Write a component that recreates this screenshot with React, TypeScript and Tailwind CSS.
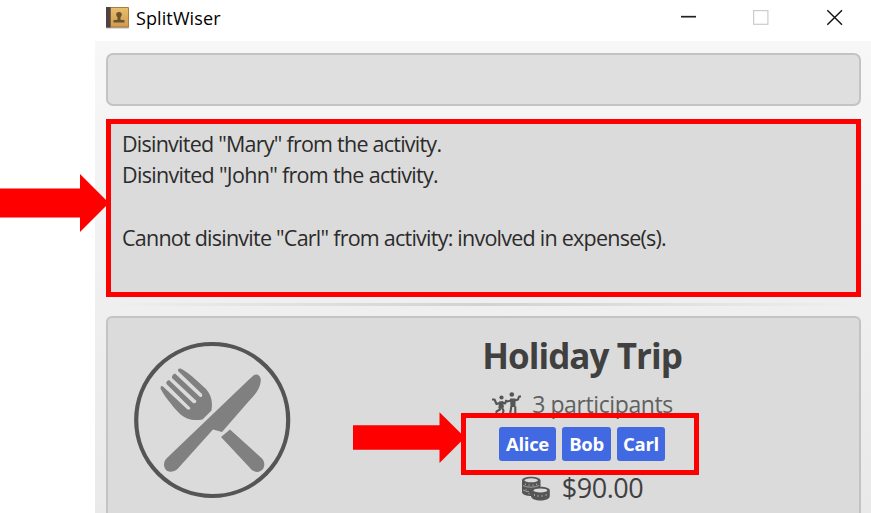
import React from "react";

function BookIcon() {
  return (
    <svg width="23" height="22" viewBox="0 0 23 22" className="block">
      <defs>
        <linearGradient id="cover" x1="0" y1="0" x2="0" y2="1">
          <stop offset="0" stopColor="#e8bd6c" />
          <stop offset="1" stopColor="#cf9c4c" />
        </linearGradient>
      </defs>
      <rect x="0" y="1" width="23" height="20.5" rx="1" fill="#b8b8bc" />
      <rect x="0" y="0" width="23" height="20.5" rx="1" fill="#a87c40" />
      <rect x="5" y="1" width="17" height="18.5" fill="url(#cover)" />
      <rect x="0" y="0" width="4.5" height="20.5" fill="#4f4240" />
      <path d="M13 5c1.900 0 2.800 1.100 2.800 2.500 0 1.300-.9 2.200-1.300 2.700v2.600l4 .5v2.200H7.500v-2.200l4-.5v-2.600c-.4-.5-1.300-1.400-1.300-2.700C10.200 6.100 11.100 5 13 5z" fill="#6b5130" />
    </svg>
  );
}

function CutleryIcon() {
  return (
    <svg width="158" height="158" viewBox="133 341 158 158" className="block shrink-0">
      <circle cx="212.2" cy="420" r="76" fill="none" stroke="#555" strokeWidth="4.2" />
      <g fill="#808080">
        <path d="M180.5 368.5C185 370 198 381 206 389C211 395 213 401 211.5 410.5L202.5 419.5C194 421 187 420 180 414C172 406 163 394 160.5 388.5Q160.5 385 163 386.5L187 409Q189.5 411 190.5 408L166.500 384Q165.500 381.500 169 380L193 403Q196 404 196.500 401L172 378Q171.500 375 175 373.500L200 397Q203 397.500 202 394L178 371Q177.500 368 180.500 368.500Z" />
        <path d="M253.500 375.500C257 373 261 375.500 260.800 381C260 389 255 395 249 401L222 432L213 429.500L177.500 469C173 473 167 472.500 165 468.500C163 465 164 460 168 457L249 379.500Z" />
        <path d="M230 429.500L262 458.500C266 463 264.500 469 260.500 471C257 473 252.500 471.500 250 468L221 437Z" />
      </g>
    </svg>
  );
}

function PeopleIcon() {
  return (
    <svg width="30" height="24" viewBox="491 391 30 24" className="block">
      <g fill="none" stroke="#555" strokeWidth="2.100" strokeLinejoin="round">
        <path d="M492 399.500h2.500l2 4.500 3.500-1M502.500 402.500l2.500 1 1.500-3.500M499.500 407l.5 2.500-3.500 2v3.500M501.500 407l2 3.500-1 4.500" />
        <path d="M505.500 400.500l1.500 1 4-1M515 400.500l3-1 1-3h2M511.300 406.500l-1.300 8.500M515.300 406.500v8.500" />
      </g>
      <path d="M499 401.500l4-.5 1 6.500-5.500.5zM510 398.500h5.500v8.500h-5z" fill="#555" />
      <circle cx="501.500" cy="397.500" r="2.100" fill="#555" />
      <circle cx="511.800" cy="394.500" r="2.300" fill="#555" />
    </svg>
  );
}

function CoinsIcon() {
  return (
    <svg width="29" height="25" viewBox="521 476 29 25" className="block">
      <path d="M522 480.500c0-5 18-5 18.500 0v13.500c-4 3-18.500 3-18.500-2z" fill="#555" />
      <path d="M531 490.500c0-5 18.800-5 18.800 0v5.500c0 6-18.800 6-18.800 0z" fill="#555" />
      <ellipse cx="531.200" cy="480.300" rx="6.800" ry="2" fill="#dadada" />
      <ellipse cx="540.400" cy="490.400" rx="7" ry="2" fill="#dadada" />
      <g fill="none" stroke="#aaa" strokeWidth=".9">
        <path d="M523 485.500q3.500 1.800 8 1.700t8-1.700M523 490q2.500 1.500 6 1.800" />
        <path d="M525.500 483.500v1.500M529 484.300v1.500M533 484.300v1.500M536.500 483.500v1.500M526 489v1.300M529 493v1.500M534.500 494v2M538 495v2M542 495v2M546 494v2" />
      </g>
    </svg>
  );
}

function Chip({ name, className }: { name: string; className: string }) {
  return (
    <span className={`flex h-[34px] items-center justify-center rounded-[3px] bg-[#4169e1] text-[18.500px] font-bold tracking-[-0.300px] text-white ${className}`}>
      {name}
    </span>
  );
}

export default function App() {
  return (
    <div className="relative h-[513px] w-[871px] overflow-hidden bg-white pl-[95px] font-['Open_Sans','Noto_Sans',sans-serif] whitespace-nowrap">
      <header className="flex h-[41px] items-start pl-[11px]">
        <div className="pt-[7px]"><BookIcon /></div>
        <span className="ml-[7px] mt-[5px] text-[18px] leading-[26px] tracking-[0.100px] text-black">SplitWiser</span>
        <svg width="170" height="20" viewBox="678 8 170 20" className="mr-[23px] mt-[8px] ml-auto block" fill="none">
          <path d="M681 16.700h15" stroke="#222" strokeWidth="1.700" />
          <rect x="753.600" y="10.600" width="14.300" height="13.700" stroke="#ccc" strokeWidth="1.200" />
          <path d="M827.300 10.300l14.700 14.500M842 10.300l-14.700 14.500" stroke="#111" strokeWidth="1.400" />
        </svg>
      </header>

      <main className="flex h-[472px] flex-col bg-linear-to-b from-[#f7f7f7] to-[#e9e9e9] pr-[10px] pl-[11px] pt-[12px]">
        <div className="h-[53px] shrink-0 rounded-[7px] border-2 border-[#c3c3c3] bg-[#dfdfdf]" />

        <div className="mt-[13px] h-[178px] shrink-0 border-[5px] border-[#ff0000] bg-[#dbdbdb] pt-[4px] pl-[11px] text-[21.500px] leading-[31.200px] tracking-[-0.760px] text-[#2b2b2b]">
          <p>Disinvited "Mary" from the activity.</p>
          <p className="tracking-[-0.690px]">Disinvited "John" from the activity.</p>
          <p className="mt-[32px]">Cannot disinvite "Carl" from activity: involved in expense(s).</p>
        </div>

        <div className="mt-[6px] h-[3px] shrink-0 bg-linear-to-r from-transparent via-[#d2d2d2] to-transparent" />

        <section className="mt-[10px] flex h-[230px] shrink-0 rounded-t-[6px] border-2 border-b-0 border-[#c3c3c3] bg-[#dbdbdb] pl-[25px]">
          <div className="pt-[23px]"><CutleryIcon /></div>
          <div className="flex flex-1 flex-col items-center pl-[14px]">
            <h1 className="mt-[14px] text-[35px] leading-[48px] font-bold tracking-[-0.950px] text-[#404040]">Holiday Trip</h1>
            <div className="mt-[6px] flex h-[34px] items-center gap-[11px]">
              <PeopleIcon />
              <span className="pt-px text-[23px] leading-[34px] tracking-[-0.400px] text-[#606060]">3 participants</span>
            </div>
            <div className="mt-[7px] flex gap-[6px]">
              <Chip name="Alice" className="w-[57px]" />
              <Chip name="Bob" className="w-[49px]" />
              <Chip name="Carl" className="w-[48px]" />
            </div>
            <div className="mt-[7px] flex h-[40px] items-center gap-[12px]">
              <CoinsIcon />
              <span className="text-[27px] leading-[40px] tracking-[-0.500px] text-[#404040]">$90.00</span>
            </div>
          </div>
        </section>
      </main>

      <svg width="109" height="60" viewBox="0 173 109 60" className="absolute top-[173px] left-0">
        <path d="M0 188.500H80V174L109 203L80 232V217.500H0z" fill="#ff0000" />
      </svg>
      <svg width="112" height="54" viewBox="353 411 112 54" className="absolute top-[411px] left-[353px]">
        <path d="M353 425.300H439.500V412.300L465 437.500L439.500 463V449.800H353z" fill="#ff0000" />
      </svg>
      <div className="absolute top-[413px] left-[461px] h-[62px] w-[238px] border-[5px] border-[#ff0000]" />
    </div>
  );
}
